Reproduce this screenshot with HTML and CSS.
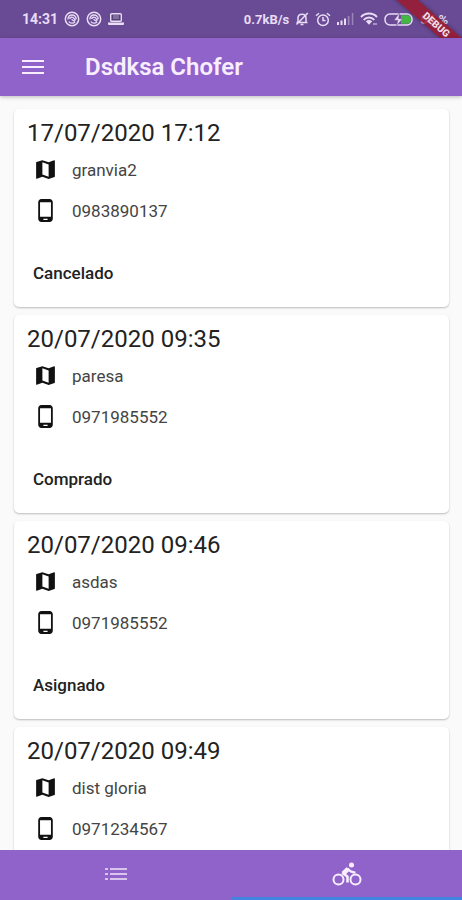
FILE: index.html
```
<!DOCTYPE html>
<html lang="es">
<head>
    <meta charset="UTF-8">
    <meta name="viewport" content="width=device-width, initial-scale=1.0">
    <title>Dsdksa Chofer</title>
    <link rel="stylesheet" href="styles.css">
</head>

<body>
    <!-- Shared icons -->
    <svg class="sprite" aria-hidden="true">
        <symbol id="map" viewBox="0 0 24 24">
            <path d="M20.5 3l-.16.03L15 5.1 9 3 3.36 4.9c-.21.07-.36.25-.36.48V20.5c0 .28.22.5.5.5l.16-.03L9 18.9l6 2.1 5.64-1.9c.21-.07.36-.25.36-.48V3.5c0-.28-.22-.5-.5-.5zM15 19l-6-2.11V5l6 2.11V19z"/>
        </symbol>
        <symbol id="phone" viewBox="0 0 24 24">
            <path d="M16 1H8C6.34 1 5 2.34 5 4v16c0 1.66 1.34 3 3 3h8c1.66 0 3-1.34 3-3V4c0-1.66-1.34-3-3-3zm-2 20h-4v-1h4v1zm3.25-3H6.75V4h10.5v14z"/>
        </symbol>
        <symbol id="swirl" viewBox="0 0 16 16">
            <circle cx="8" cy="8" r="6.7" fill="none" stroke="currentColor" stroke-width="1.5"/>
            <path d="M4 8.500C3.600 5.800 5.500 4 8 4s4.300 1.800 4.200 4.200M5.500 8c.3-2 3.300-2.500 4.500-.6l1.500 2.100M4.800 10.500c1.500 2.200 4.700 2.200 6.300.3M7.500 8.200l3.300 2.300" fill="none" stroke="currentColor" stroke-width="1.3"/>
        </symbol>
    </svg>

    <div class="status-bar">
        <div class="status-group left">
            <span class="clock">14:31</span>
            <svg width="16" height="16"><use href="#swirl"/></svg>
            <svg width="16" height="16"><use href="#swirl"/></svg>
            <svg width="16" height="14" viewBox="0 0 16 14">
                <rect x="2.700" y="1.700" width="10.600" height="7.600" rx="1" fill="#55407a" stroke="currentColor" stroke-width="1.400"/>
                <path d="M5 4h6M5 6h6" stroke="currentColor" stroke-width=".6"/>
                <path d="M0 10.500h16v1.500q0 1-1 1H1q-1 0-1-1z" fill="currentColor"/>
            </svg>
        </div>
        <div class="status-group right">
            <span>0.7kB/s</span>
            <svg width="14" height="14" viewBox="0 0 14 14" fill="none" stroke="currentColor" stroke-width="1.500">
                <path d="M3 10V6c0-5 8-5 8 0v4M1.500 10.400h11M5.500 12.500h3M12.800 1L1.500 12.500"/>
            </svg>
            <svg width="16" height="15" viewBox="0 0 16 15" fill="none" stroke="currentColor" stroke-width="1.500">
                <circle cx="8" cy="8.300" r="5.300"/>
                <path d="M8 5v3.500h2.500M1 3.800L4 1.200M15 3.800L12 1.200"/>
            </svg>
            <svg width="17" height="12" viewBox="0 0 17 12" fill="currentColor">
                <path d="M0 9h2v3H0zM3.500 7.500h2V12h-2zM7 5.500h2V12H7z"/>
                <path d="M10.800 3h1.700v9h-1.700zM14.800 0h1.500v12h-1.500z" opacity=".4"/>
            </svg>
            <svg width="18" height="14" viewBox="0 0 18 14" fill="none" stroke="currentColor" stroke-width="1.900">
                <path d="M1 5c4.300-4.600 11.700-4.600 16 0M3.700 7.800c3-3 7.600-3 10.600 0"/>
                <path d="M5.800 9.300Q9 6.700 12.200 9.300L9 12.800z" fill="currentColor" stroke="none"/>
                <path d="M14 11v2M16 11v2" stroke-width="1"/>
            </svg>
            <svg width="30" height="13" viewBox="0 0 30 13">
                <rect x="1" y="1" width="27" height="11" rx="5" fill="none" stroke="currentColor" stroke-width="1.500"/>
                <path d="M17 2.300h6q4 0 4 4.200t-4 4.200h-6z" fill="#43b944"/>
                <path d="M15.500 0L10 7.300h3.800L12.500 13 18.500 5.700h-3.800z" fill="currentColor" stroke="#684a93" stroke-width=".5"/>
            </svg>
            <span>54 %</span>
        </div>
    </div>

    <header class="app-bar">
        <button class="menu-button" type="button" aria-label="Menu">
            <svg width="22" height="16" viewBox="0 0 22 16">
                <path d="M0 2h22M0 8h22M0 14h22" stroke="currentColor" stroke-width="2"/>
            </svg>
        </button>
        <h1>Dsdksa Chofer</h1>
    </header>

    <main class="orders">
        <article class="card">
            <h2>17/07/2020 17:12</h2>
            <p class="row"><svg class="icon"><use href="#map"/></svg>granvia2</p>
            <p class="row"><svg class="icon"><use href="#phone"/></svg>0983890137</p>
            <button class="state" type="button">Cancelado</button>
        </article>
        <article class="card">
            <h2>20/07/2020 09:35</h2>
            <p class="row"><svg class="icon"><use href="#map"/></svg>paresa</p>
            <p class="row"><svg class="icon"><use href="#phone"/></svg>0971985552</p>
            <button class="state" type="button">Comprado</button>
        </article>
        <article class="card">
            <h2>20/07/2020 09:46</h2>
            <p class="row"><svg class="icon"><use href="#map"/></svg>asdas</p>
            <p class="row"><svg class="icon"><use href="#phone"/></svg>0971985552</p>
            <button class="state" type="button">Asignado</button>
        </article>
        <article class="card">
            <h2>20/07/2020 09:49</h2>
            <p class="row"><svg class="icon"><use href="#map"/></svg>dist gloria</p>
            <p class="row"><svg class="icon"><use href="#phone"/></svg>0971234567</p>
        </article>
    </main>

    <nav class="tabs">
        <a href="#lista" aria-label="Lista">
            <svg class="list-icon" width="22" height="12" viewBox="0 0 22 12">
                <path d="M0 1h3M0 6h3M0 11h3M5 1h17M5 6h17M5 11h17" stroke="currentColor" stroke-width="2"/>
            </svg>
        </a>
        <a class="active" href="#viajes" aria-label="Viajes">
            <svg width="30" height="24" viewBox="0 0 30 24" fill="none" stroke="currentColor">
                <circle cx="6.500" cy="17.500" r="5" stroke-width="2"/>
                <circle cx="23.500" cy="17.500" r="5" stroke-width="2"/>
                <circle cx="19.500" cy="3" r="2.500" fill="currentColor" stroke="none"/>
                <path d="M16 6.500L11 11.500l4.500 3v6" stroke-width="2.600" stroke-linejoin="round"/>
                <path d="M14.500 5.200L9.500 10l4 3 4-4.500z" fill="currentColor" stroke="none"/>
                <path d="M15.500 6.500q3 4 8 4" stroke-width="2.200"/>
            </svg>
        </a>
    </nav>

    <div class="debug-corner"><span class="debug-banner">DEBUG</span></div>
</body>
</html>
```
FILE: styles.css
```
* {
    box-sizing: border-box;
}

body {
    font-family: Roboto, "Liberation Sans", sans-serif;
    background-color: #fafafa;
    color: #222;
    display: flex;
    flex-direction: column;
    height: 100vh;
    margin: 0;
    overflow: hidden;
}

button {
    font-family: inherit;
    background: none;
    border: none;
    padding: 0;
    cursor: pointer;
}

.sprite {
    display: none;
}

.status-bar {
    background-color: #694b95;
    color: #e9dcf5;
    display: flex;
    justify-content: space-between;
    align-items: center;
    height: 38px;
    padding: 0 14px 0 22px;
    font-size: 13px;
    font-weight: bold;
}

.status-group {
    display: flex;
    align-items: center;
    gap: 6px;
    white-space: nowrap;
}

.clock {
    font-size: 14px;
}

.app-bar {
    background-color: #9063cb;
    color: #f8eeff;
    display: flex;
    align-items: center;
    gap: 41px;
    height: 58px;
    flex-shrink: 0;
    padding: 0 22px;
    box-shadow: 0 1px 4px rgba(0, 0, 0, 0.25);
    z-index: 1;
}

.menu-button {
    color: inherit;
    display: flex;
}

h1 {
    margin: 0;
    font-size: 24px;
    font-weight: 600;
}

.orders {
    flex: 1;
    min-height: 0;
    overflow-y: auto;
    scrollbar-width: none;
    display: flex;
    flex-direction: column;
    gap: 8px;
    padding: 13px 13px 0 14px;
}

.card {
    background: #fff;
    border-radius: 5px;
    box-shadow: 0 1px 2px rgba(0, 0, 0, 0.25);
    flex-shrink: 0;
    padding: 8px 13px 20px;
}

h2 {
    margin: 0;
    font-size: 24px;
    line-height: 32px;
    font-weight: 400;
}

.row {
    display: flex;
    align-items: center;
    gap: 14px;
    height: 41px;
    margin: 0;
    padding-left: 6px;
    color: #444;
    font-size: 17px;
}

.icon {
    width: 25px;
    height: 25px;
    fill: #111;
}

.state {
    display: block;
    height: 28px;
    margin-top: 28px;
    padding: 0 6px;
    color: #222;
    font-size: 17px;
    font-weight: 500;
}

.tabs {
    background-color: #9063cb;
    color: #f8eeff;
    display: flex;
    height: 50px;
    flex-shrink: 0;
}

.tabs a {
    flex: 1;
    display: flex;
    align-items: center;
    justify-content: center;
    color: inherit;
    border-bottom: 3px solid transparent;
}

.tabs .active {
    border-bottom-color: #4285e0;
}

.list-icon {
    opacity: 0.7;
}

/* Corner ribbon over the status bar */
.debug-corner {
    position: absolute;
    top: 0;
    right: 0;
    width: 80px;
    height: 80px;
    overflow: hidden;
    pointer-events: none;
}

.debug-banner {
    position: absolute;
    top: 18px;
    right: -34px;
    width: 120px;
    transform: rotate(41deg);
    background-color: rgba(155, 25, 45, 0.85);
    color: #efdbe5;
    box-shadow: 0 0 4px rgba(0, 0, 0, 0.4);
    font-size: 10px;
    font-weight: 900;
    line-height: 14px;
    text-align: center;
}
```
